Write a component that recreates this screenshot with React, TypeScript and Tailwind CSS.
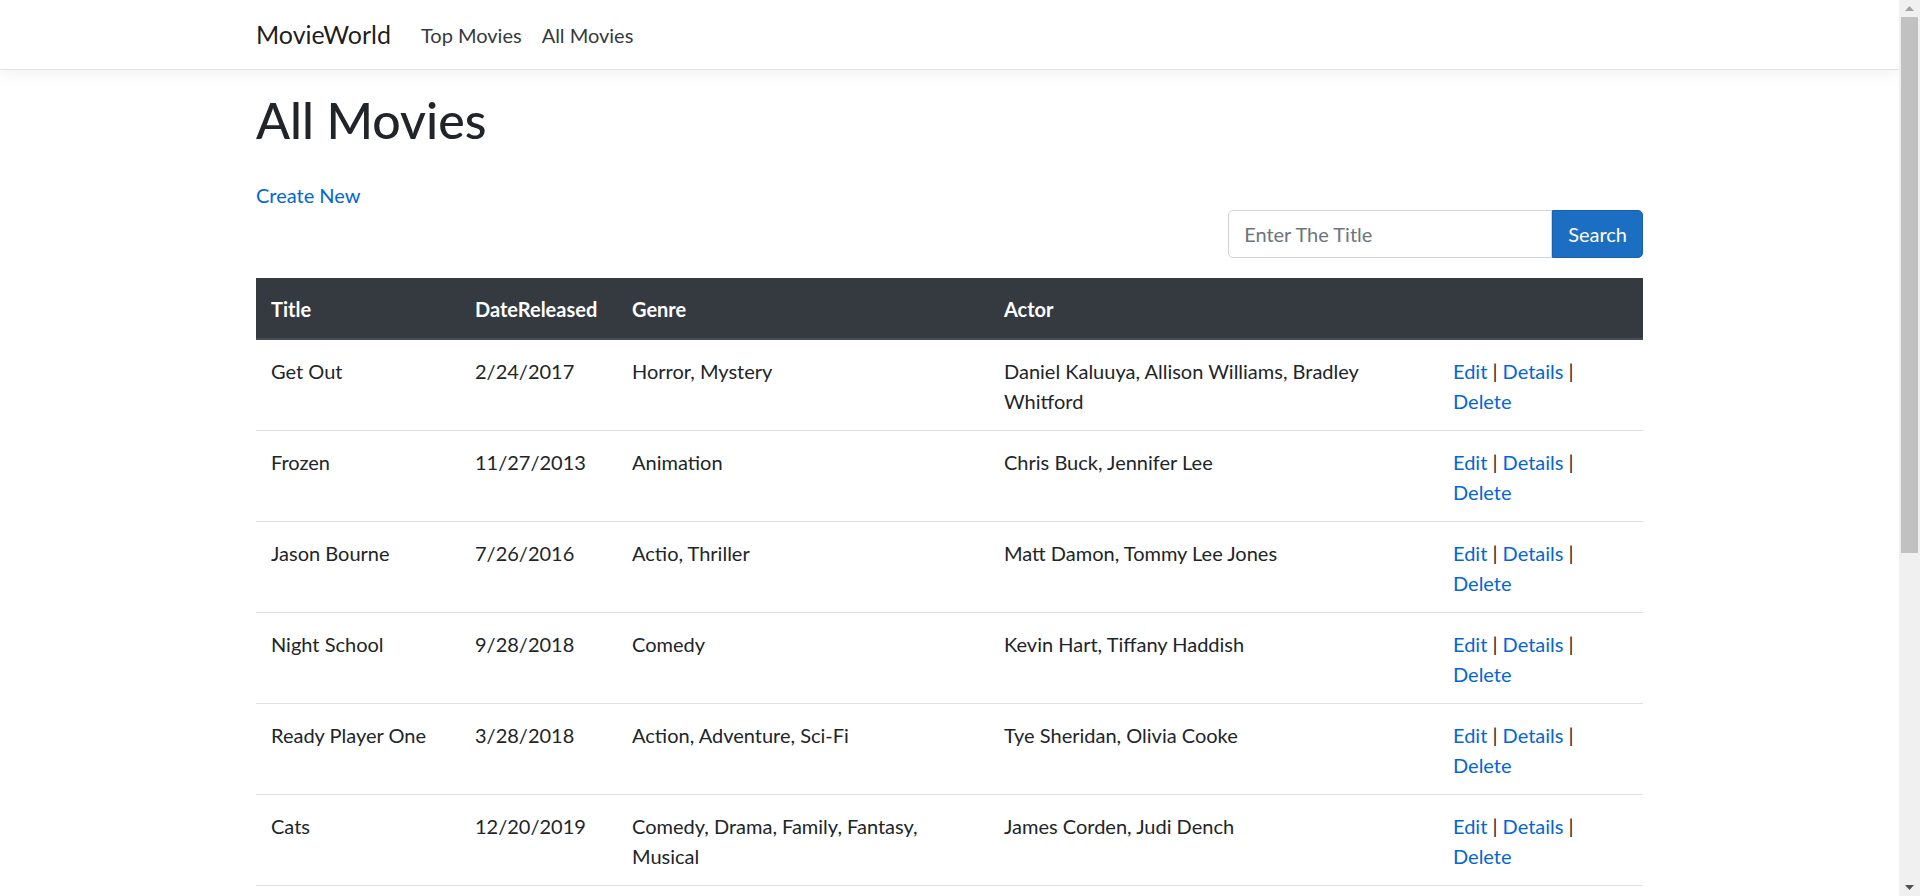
type Movie = {
  title: string;
  released: string;
  genre: string;
  actor: string;
};

const movies: Movie[] = [
  { title: "Get Out", released: "2/24/2017", genre: "Horror, Mystery", actor: "Daniel Kaluuya, Allison Williams, Bradley Whitford" },
  { title: "Frozen", released: "11/27/2013", genre: "Animation", actor: "Chris Buck, Jennifer Lee" },
  { title: "Jason Bourne", released: "7/26/2016", genre: "Actio, Thriller", actor: "Matt Damon, Tommy Lee Jones" },
  { title: "Night School", released: "9/28/2018", genre: "Comedy", actor: "Kevin Hart, Tiffany Haddish" },
  { title: "Ready Player One", released: "3/28/2018", genre: "Action, Adventure, Sci-Fi", actor: "Tye Sheridan, Olivia Cooke" },
  { title: "Cats", released: "12/20/2019", genre: "Comedy, Drama, Family, Fantasy, Musical", actor: "James Corden, Judi Dench" },
];

function Navbar() {
  return (
    <nav className="h-[70px] border-b border-[#dee2e6] bg-white shadow-[0_5px_15px_rgba(0,0,0,0.05)]">
      <div className="mx-auto flex h-full w-[1387px] items-center">
        <a href="#" className="mr-[20px] text-[25px] leading-[37px] text-[rgba(0,0,0,0.9)]">
          MovieWorld
        </a>
        <ul className="flex">
          <li>
            <a href="#" className="block px-[10px] text-[20px] leading-[30px] text-[#343a40]">
              Top Movies
            </a>
          </li>
          <li>
            <a href="#" className="block px-[10px] text-[20px] leading-[30px] text-[#343a40]">
              All Movies
            </a>
          </li>
        </ul>
      </div>
    </nav>
  );
}

function SearchForm() {
  return (
    <form className="flex justify-end" onSubmit={(e) => e.preventDefault()}>
      <div className="flex h-[48px]">
        <input
          type="text"
          placeholder="Enter The Title"
          className="w-[324px] rounded-l-[5px] border border-[#ced4da] bg-white px-[15px] text-[20px] text-[#495057] outline-none placeholder:text-[#6c757d]"
        />
        <button
          type="submit"
          className="rounded-r-[5px] border border-[#1861ac] bg-[#1b6ec2] px-[15px] text-[20px] text-white"
        >
          Search
        </button>
      </div>
    </form>
  );
}

function Actions() {
  return (
    <>
      <a href="#" className="text-[#0366d6]">Edit</a> |{" "}
      <a href="#" className="text-[#0366d6]">Details</a> |{" "}
      <a href="#" className="text-[#0366d6]">Delete</a>
    </>
  );
}

// window scrollbar, as it shows in the screenshot
function Scrollbar() {
  return (
    <div className="flex w-[21px] shrink-0 flex-col bg-[#f0f0f0]">
      <div className="flex h-[17px] items-center justify-center">
        <svg width="9" height="5" viewBox="0 0 9 5">
          <path d="M4.5 0 9 5H0z" fill="#a3a3a3" />
        </svg>
      </div>
      <div className="h-[536px] px-[2px]">
        <div className="h-full bg-[#c1c1c1]" />
      </div>
      <div className="flex-1" />
      <div className="flex h-[17px] items-center justify-center">
        <svg width="9" height="5" viewBox="0 0 9 5">
          <path d="M0 0h9L4.5 5z" fill="#505050" />
        </svg>
      </div>
    </div>
  );
}

export default function App() {
  return (
    <div className="flex h-screen overflow-hidden bg-white font-['Lato',sans-serif] text-[20px] leading-[30px] text-[#212529]">
      <div className="min-w-0 flex-1 overflow-hidden">
        <Navbar />
        <main className="mx-auto mt-[20px] w-[1387px] pb-[20px]">
          <h1 className="mb-[30px] pt-[1px] text-[50px] font-medium leading-[59px]">All Movies</h1>
          <p>
            <a href="#" className="text-[#0366d6]">Create New</a>
          </p>
          <SearchForm />
          <table className="mt-[20px] w-full table-fixed border-collapse text-left">
            <colgroup>
              <col className="w-[204px]" />
              <col className="w-[157px]" />
              <col className="w-[372px]" />
              <col className="w-[449px]" />
              <col className="w-[205px]" />
            </colgroup>
            <thead className="bg-[#343a40] text-white">
              <tr>
                <th className="border-b-2 border-[#454d55] px-[15px] pt-[16px] pb-[14px] font-bold">Title</th>
                <th className="border-b-2 border-[#454d55] px-[15px] pt-[16px] pb-[14px] font-bold">DateReleased</th>
                <th className="border-b-2 border-[#454d55] px-[15px] pt-[16px] pb-[14px] font-bold">Genre</th>
                <th className="border-b-2 border-[#454d55] px-[15px] pt-[16px] pb-[14px] font-bold">Actor</th>
                <th className="border-b-2 border-[#454d55] px-[15px] pt-[16px] pb-[14px]"></th>
              </tr>
            </thead>
            <tbody>
              {movies.map((m) => (
                <tr
                  key={m.title}
                  className="border-t border-[#dee2e6] align-top first:border-t-0 last:border-b"
                >
                  <td className="px-[15px] pt-[16px] pb-[14px]">{m.title}</td>
                  <td className="px-[15px] pt-[16px] pb-[14px]">{m.released}</td>
                  <td className="px-[15px] pt-[16px] pb-[14px]">{m.genre}</td>
                  <td className="px-[15px] pt-[16px] pb-[14px]">{m.actor}</td>
                  <td className="px-[15px] pt-[16px] pb-[14px]">
                    <Actions />
                  </td>
                </tr>
              ))}
            </tbody>
          </table>
        </main>
      </div>
      <Scrollbar />
    </div>
  );
}
